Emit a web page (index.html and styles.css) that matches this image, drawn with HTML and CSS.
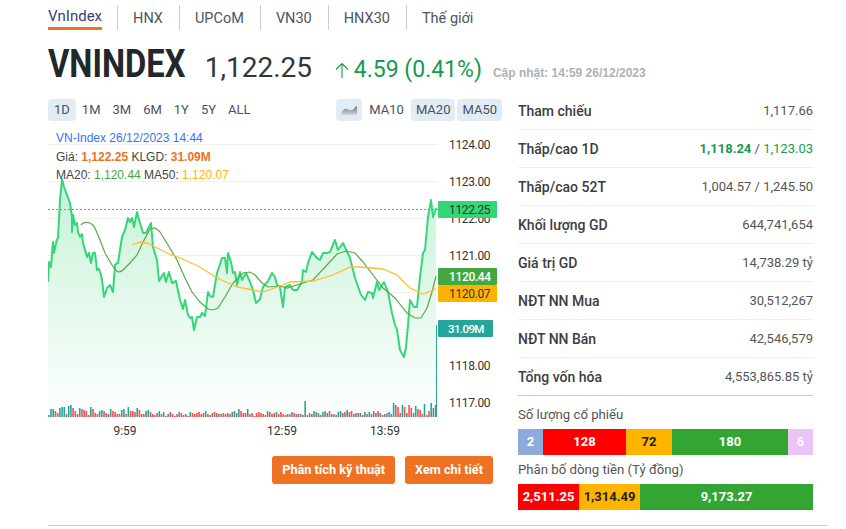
FILE: index.html
```html
<!DOCTYPE html>
<html lang="vi">
<head>
    <meta charset="UTF-8">
    <title>VNINDEX</title>
    <link rel="stylesheet" href="styles.css">
</head>
<body>
    <div class="page">
        <div class="tabs">
            <a class="tab active">VnIndex</a>
            <a class="tab">HNX</a>
            <a class="tab">UPCoM</a>
            <a class="tab">VN30</a>
            <a class="tab">HNX30</a>
            <a class="tab">Thế giới</a>
        </div>
        <div class="head">
            <h1 class="title">VNINDEX</h1>
            <span class="price">1,122.25</span>
            <span class="change">
                <svg class="arrow" width="14" height="16" viewBox="0 0 14 16"><path d="M7 16V1.500M1 7.500L7 1.500l6 6" fill="none" stroke="#159a4f" stroke-width="1.100"/></svg>
                4.59 (0.41%)
            </span>
            <span class="updated">Cập nhật: 14:59 26/12/2023</span>
        </div>
        <div class="main">
            <div class="left">
                <div class="toolbar">
                    <div class="ranges">
                        <span class="btn on">1D</span>
                        <span class="btn">1M</span>
                        <span class="btn">3M</span>
                        <span class="btn">6M</span>
                        <span class="btn">1Y</span>
                        <span class="btn">5Y</span>
                        <span class="btn">ALL</span>
                    </div>
                    <div class="mas">
                        <span class="btn on icon-btn">
                            <svg width="18" height="12" viewBox="0 0 18 12">
                                <defs><linearGradient id="ico" x1="0" y1="0" x2="0" y2="1"><stop offset="0" stop-color="#6f7378"/><stop offset="1" stop-color="#d5d8dc"/></linearGradient></defs>
                                <path d="M1 10C3 5 5 4 8 5.500S13 6 14 4.500 16.500 2 17 2V11H1Z" fill="url(#ico)"/>
                            </svg>
                        </span>
                        <span class="btn">MA10</span>
                        <span class="btn on">MA20</span>
                        <span class="btn on">MA50</span>
                    </div>
                </div>
                <div class="chart">
                    <div class="legend">
                        <div class="legend-title">VN-Index 26/12/2023 14:44</div>
                        <div>Giá: <b class="orange">1,122.25</b> KLGD: <b class="orange">31.09M</b></div>
                        <div>MA20: <span class="green">1,120.44</span> MA50: <span class="yellow">1,120.07</span></div>
                    </div>
                    <svg class="plot" width="449" height="315" viewBox="48 130 449 315">
                        <defs>
                            <linearGradient id="area" x1="0" y1="179" x2="0" y2="418" gradientUnits="userSpaceOnUse">
                                <stop offset="0" stop-color="#c6f2d7"/>
                                <stop offset="1" stop-color="#ffffff"/>
                            </linearGradient>
                        </defs>
                        <path class="grid" d="M48 144.500H437M48 181.500H437M48 218.500H437M48 255.500H437M48 292.500H437M48 329.500H437M48 366.500H437M48 403.500H437"/>
                        <path fill="url(#area)" d="M48 418V282L49 262 51 267 52 253 53 242 54 253 56 243 58 237 59 220 60 200 62 179 64 187 67 195 70 203 72 217 72 232 73 215 75 225 77 223 78 232 80 237 82 234 83 243 87 257 89 253 91 263 93 253 95 253 97 270 99 269 101 275 102 280 104 297 107 288 110 285 113 292 115 265 117 263 118 263 122 237 125 230 128 218 130 222 132 218 134 227 137 212 140 223 143 233 146 233 151 223 153 247 157 260 159 281 164 273 166 282 169 272 172 283 176 281 180 300 183 309 185 300 188 315 190 318 192 317 194 330 197 317 200 317 202 313 205 316 208 292 210 296 213 297 217 273 222 258 225 258 227 273 228 253 231 262 233 273 235 272 237 285 240 272 242 280 246 273 250 282 253 290 256 303 260 299 263 287 268 281 272 273 275 277 277 285 280 287 283 307 285 287 290 285 293 290 297 290 302 282 303 270 306 272 308 263 312 252 317 258 320 260 323 253 327 253 330 252 335 240 338 250 343 243 350 258 355 278 361 295 365 300 368 292 372 293 373 298 377 282 379 290 384 282 388 292 392 313 395 325 397 330 400 350 404 357 406 347 408 325 410 300 414 307 417 307 420 277 423 253 425 250 428 217 431 200 433 217 436 208V418Z"/>
                        <path class="price-line" d="M48 282L49 262 51 267 52 253 53 242 54 253 56 243 58 237 59 220 60 200 62 179 64 187 67 195 70 203 72 217 72 232 73 215 75 225 77 223 78 232 80 237 82 234 83 243 87 257 89 253 91 263 93 253 95 253 97 270 99 269 101 275 102 280 104 297 107 288 110 285 113 292 115 265 117 263 118 263 122 237 125 230 128 218 130 222 132 218 134 227 137 212 140 223 143 233 146 233 151 223 153 247 157 260 159 281 164 273 166 282 169 272 172 283 176 281 180 300 183 309 185 300 188 315 190 318 192 317 194 330 197 317 200 317 202 313 205 316 208 292 210 296 213 297 217 273 222 258 225 258 227 273 228 253 231 262 233 273 235 272 237 285 240 272 242 280 246 273 250 282 253 290 256 303 260 299 263 287 268 281 272 273 275 277 277 285 280 287 283 307 285 287 290 285 293 290 297 290 302 282 303 270 306 272 308 263 312 252 317 258 320 260 323 253 327 253 330 252 335 240 338 250 343 243 350 258 355 278 361 295 365 300 368 292 372 293 373 298 377 282 379 290 384 282 388 292 392 313 395 325 397 330 400 350 404 357 406 347 408 325 410 300 414 307 417 307 420 277 423 253 425 250 428 217 431 200 433 217 436 208"/>
                        <path class="ma20-line" d="M81 225C83 222 87 222 90 223 92 224 94 226 95 228L100 240 105 253 112 265C115 269 116 271 118 272 120 272 122 271 123 270L130 263 137 255 143 242 150 229C152 228 153 228 155 228 157 229 158 230 160 232L168 245 177 260 185 278 192 292 200 302 208 309 213 310 218 308 225 297 233 283 243 273 250 272 255 275 262 283 268 287 280 286 287 288 303 283 313 280 327 265 337 254 346 251 355 253 363 262 373 275 383 288 395 298 407 313 415 318 421 318 427 308 432 292 436 276"/>
                        <path class="ma50-line" d="M132 245L140 242 147 243 157 248 167 253 180 258 200 267 217 278 237 287 253 290 263 292 280 286 290 282 313 281 333 275 350 267 360 267 383 269 397 275 410 288 423 294 436 289"/>
                        <path class="last-line" d="M48 209.500H438"/>
                        <g id="volume"></g>
                        <path class="vol-axis" d="M436.500 325V417"/>
                        <g class="axis tick">
                            <text x="449" y="149">1124.00</text>
                            <text x="449" y="186">1123.00</text>
                            <text x="449" y="223">1122.00</text>
                            <text x="449" y="260">1121.00</text>
                            <text x="449" y="370">1118.00</text>
                            <text x="449" y="407">1117.00</text>
                        </g>
                        <g class="axis">
                            <text x="125" y="435" text-anchor="middle">9:59</text>
                            <text x="282" y="435" text-anchor="middle">12:59</text>
                            <text x="385" y="435" text-anchor="middle">13:59</text>
                        </g>
                        <rect x="438" y="201" width="59" height="17" rx="1" fill="#33d778"/>
                        <text class="axis tick" x="449" y="214">1122.25</text>
                        <rect x="438" y="268" width="59" height="17" rx="1" fill="#43a83f"/>
                        <text class="axis tick white" x="449" y="281">1120.44</text>
                        <rect x="438" y="285" width="59" height="17" rx="1" fill="#ffb300"/>
                        <text class="axis tick" x="449" y="298">1120.07</text>
                        <rect x="438" y="320" width="55" height="17" rx="1" fill="#26a69a"/>
                        <text class="axis tick white vol-label" x="448" y="333">31.09M</text>
                    </svg>
                </div>
                <div class="actions">
                    <a class="action">Phân tích kỹ thuật</a>
                    <a class="action">Xem chi tiết</a>
                </div>
            </div>
            <div class="right">
                <div class="row"><span class="name">Tham chiếu</span><span>1,117.66</span></div>
                <div class="row"><span class="name">Thấp/cao 1D</span><span><b class="up">1,118.24</b> / <span class="up">1,123.03</span></span></div>
                <div class="row"><span class="name">Thấp/cao 52T</span><span>1,004.57 / 1,245.50</span></div>
                <div class="row"><span class="name">Khối lượng GD</span><span>644,741,654</span></div>
                <div class="row"><span class="name">Giá trị GD</span><span>14,738.29 tỷ</span></div>
                <div class="row"><span class="name">NĐT NN Mua</span><span>30,512,267</span></div>
                <div class="row"><span class="name">NĐT NN Bán</span><span>42,546,579</span></div>
                <div class="row last"><span class="name">Tổng vốn hóa</span><span>4,553,865.85 tỷ</span></div>
                <div class="bar-title">Số lượng cổ phiếu</div>
                <div class="bar">
                    <span class="seg blue" style="width:25px">2</span>
                    <span class="seg red" style="width:83px">128</span>
                    <span class="seg amber" style="width:46px">72</span>
                    <span class="seg lime" style="width:116px">180</span>
                    <span class="seg pink" style="width:25px">6</span>
                </div>
                <div class="bar-title second">Phân bố dòng tiền (Tỷ đồng)</div>
                <div class="bar">
                    <span class="seg red" style="width:61px">2,511.25</span>
                    <span class="seg amber" style="width:61px">1,314.49</span>
                    <span class="seg lime" style="width:173px">9,173.27</span>
                </div>
            </div>
        </div>
        <div class="rule"></div>
    </div>
    <script src="chart.js"></script>
</body>
</html>
```

FILE: styles.css
```css
body {
    margin: 0;
    padding: 0;
    background: #fff;
    font-family: Roboto, Arial, sans-serif;
    color: #333;
    overflow: hidden;
}
.page {
    width: 780px;
    margin-left: 48px;
}
.tabs {
    display: flex;
    height: 30px;
}
.tab {
    display: block;
    font-size: 14.5px;
    color: #4b5563;
    padding: 6px 16px 0 15px;
    margin-top: 5px;
    height: 25px;
    line-height: 16px;
    border-right: 1px solid #ccc;
    box-sizing: border-box;
}
.tab:last-child {
    border-right: none;
}
.tab.active {
    color: #3d3a78;
    font-size: 15px;
    padding: 0;
    margin: 0 15px 0 0;
    height: 30px;
    line-height: 32px;
    border-right: none;
    border-bottom: 3px solid #ef7124;
}
.tab.active + .tab {
    border-left: 1px solid #ccc;
}
.head {
    display: flex;
    align-items: baseline;
    height: 62px;
}
.title {
    margin: 0 -24px 0 0;
    font-size: 38px;
    line-height: 68px;
    font-weight: 700;
    color: #23272b;
    transform: scaleX(0.86);
    transform-origin: left;
}
.price {
    font-size: 28px;
    color: #32363a;
    margin-left: 21px;
}
.change {
    font-size: 23px;
    color: #159a4f;
    margin-left: 23px;
}
.arrow {
    margin-right: -1px;
    vertical-align: -1px;
}
.updated {
    font-family: "Liberation Sans", sans-serif;
    font-size: 12px;
    font-weight: 700;
    color: #aeb1b5;
    margin-left: 11px;
}
.main {
    display: flex;
    gap: 16px;
}
.left {
    width: 454px;
    padding-top: 7px;
}
.toolbar {
    display: flex;
    justify-content: space-between;
    height: 22px;
}
.ranges, .mas {
    display: flex;
}
.mas {
    gap: 2px;
}
.btn {
    display: block;
    font-size: 13px;
    line-height: 22px;
    height: 22px;
    padding: 0 6px;
    color: #4b5160;
    border-radius: 4px;
}
.mas .btn {
    padding: 0 5px;
}
.btn.on {
    background: #e1ecf5;
}
.mas .icon-btn {
    width: 26px;
    padding: 0;
    display: flex;
    align-items: center;
    justify-content: center;
}
.chart {
    position: relative;
    height: 315px;
    margin-top: 9px;
}
.plot {
    display: block;
}
.legend {
    position: absolute;
    left: 8px;
    top: -1px;
    font-family: "Liberation Sans", sans-serif;
    font-size: 12px;
    line-height: 18.5px;
    color: #444;
    white-space: nowrap;
}
.legend-title { color: #3b6ff5; }
.orange { color: #ef7124; }
.green { color: #43a83f; }
.yellow { color: #ffb300; }
.grid {
    fill: none;
    stroke: #f0f0f0;
    stroke-width: 1;
}
.price-line {
    fill: none;
    stroke: #33d778;
    stroke-width: 2;
    stroke-linejoin: round;
}
.ma20-line {
    fill: none;
    stroke: #5aa848;
    stroke-width: 1.2;
}
.ma50-line {
    fill: none;
    stroke: #ffbc2c;
    stroke-width: 1.3;
}
.last-line {
    stroke: #33c878;
    stroke-width: 1;
    stroke-dasharray: 2 2;
}
.vol-axis {
    stroke: #26a69a;
    stroke-width: 1;
}
.axis {
    font-family: Roboto, sans-serif;
    font-size: 12px;
    fill: #333;
}
.tick {
    letter-spacing: -0.35px;
}
.axis.white {
    fill: #fff;
    font-weight: 500;
}
.vol-label {
    letter-spacing: -0.6px;
    font-size: 11.5px;
}
.actions {
    display: flex;
    justify-content: flex-end;
    gap: 10px;
    padding-right: 9px;
    margin-top: 11px;
}
.action {
    display: block;
    height: 28px;
    line-height: 28px;
    padding: 0 10px;
    background: #ef7124;
    color: #fff;
    font-size: 12.7px;
    font-weight: 700;
    border-radius: 3px;
}
.right {
    width: 295px;
    font-size: 13px;
}
.row {
    display: flex;
    justify-content: space-between;
    align-items: center;
    height: 38px;
    box-sizing: border-box;
    border-bottom: 1px solid #eee;
    color: #555;
}
.row.last {
    border-bottom-color: #ccc;
}
.name {
    font-size: 14px;
    font-weight: 500;
    color: #3a3d42;
}
.up {
    color: #159a4f;
}
.bar-title {
    font-size: 13.2px;
    line-height: 16px;
    margin-top: 11px;
    margin-bottom: 6px;
    color: #555;
}
.bar-title.second {
    margin-top: 7px;
    margin-bottom: 6px;
}
.bar {
    display: flex;
    height: 26px;
}
.seg {
    display: block;
    text-align: center;
    line-height: 26px;
    font-size: 13px;
    font-weight: 700;
    color: #fff;
}
.blue { background: #8faadc; }
.red { background: #ff0000; }
.amber { background: #ffb400; color: #222; }
.lime { background: #33a532; }
.pink { background: #ecc4f7; }
.rule {
    height: 1px;
    background: #ccc;
    margin-top: 15px;
}
```

FILE: chart.js
```js
// volume bars, positive = green, negative = red
const vols = [2,8,8,-6,-4,9,10,10,-3,11,12,-9,-6,-3,9,-8,-7,-6,-2,10,-8,-4,-3,6,7,-6,-4,-3,8,-6,-5,-3,-3,7,8,-3,10,-6,-6,-5,9,-7,-3,-3,6,7,-5,-3,-2,-4,6,-3,5,-1,3,-5,-3,-1,-3,5,-4,-2,-3,-1,5,-4,-3,-4,-5,-3,-4,6,-3,-2,4,-5,-4,-3,3,-4,-3,-4,-3,5,6,-4,8,-6,-4,-4,8,-3,-4,-1,-4,-5,-4,-3,-2,6,-5,-3,-4,5,-3,-5,-3,-2,3,-3,5,-4,-3,-3,3,-2,16,-2,-4,-3,6,5,-4,-2,5,6,-4,-6,3,-3,-2,5,6,-4,-5,7,-5,-6,-3,4,-4,4,-2,5,-3,5,-3,6,-4,-6,4,-2,3,-4,5,3];
const tail = [14,-12,-10,-4,12,-10,4,-12,-9,4,11,-8,-7,-3,13,-2,-6,14,9,-12];
const ns = 'http://www.w3.org/2000/svg';
const volume = document.getElementById('volume');
const all = vols.concat(tail);
const step = 389 / all.length;
all.forEach(function(v, i) {
    const r = document.createElementNS(ns, 'rect');
    const h = Math.abs(v);
    r.setAttribute('x', 48 + i * step);
    r.setAttribute('y', 417 - h);
    r.setAttribute('width', 1.6);
    r.setAttribute('height', h);
    r.setAttribute('fill', v > 0 ? '#26a69a' : '#ef5350');
    volume.appendChild(r);
});
```
